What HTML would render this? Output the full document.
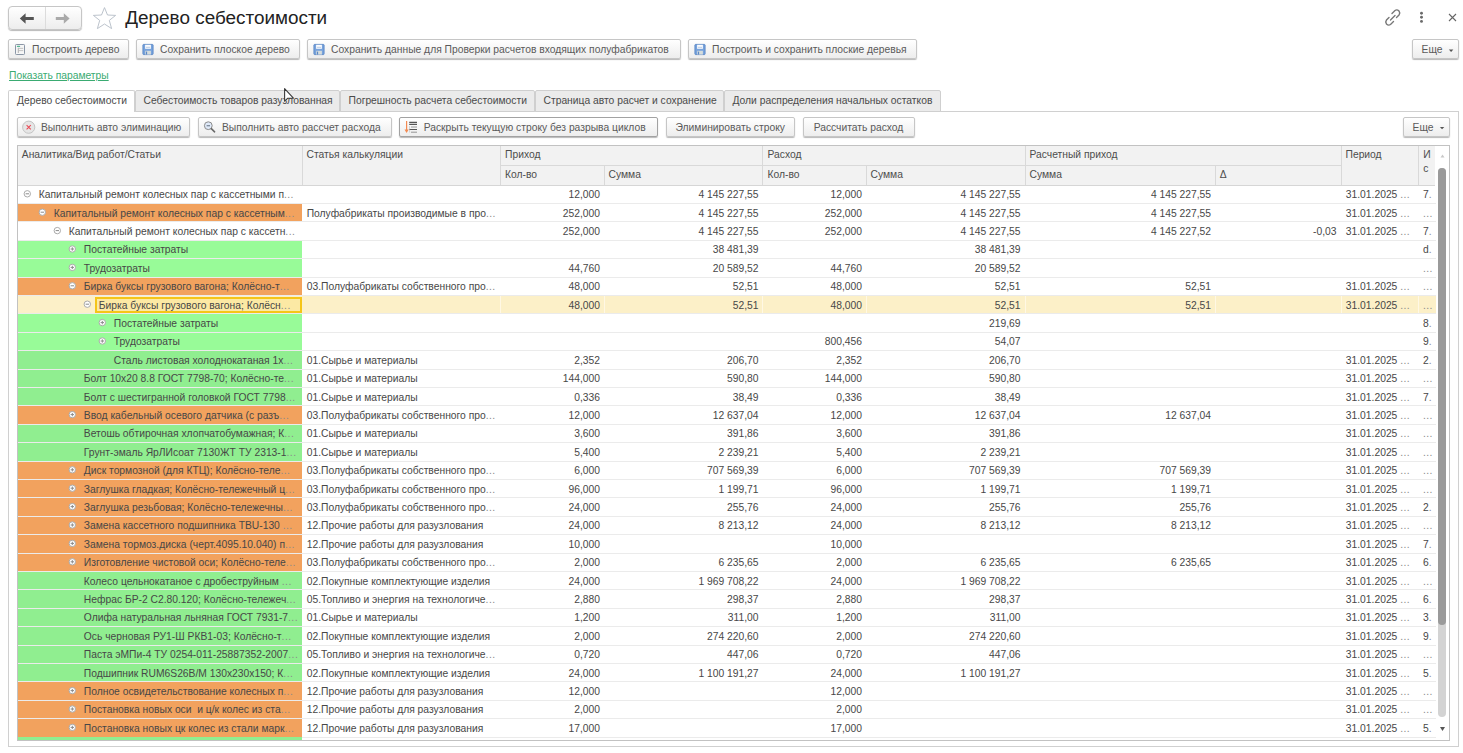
<!DOCTYPE html>
<html><head><meta charset="utf-8"><style>
html,body{margin:0;padding:0;background:#fff;width:1463px;height:753px;overflow:hidden;position:relative}
body{font-family:"Liberation Sans",sans-serif}
.t{position:absolute;line-height:1;white-space:pre}
.b{position:absolute}
.el{color:#8a8a8a;letter-spacing:0.45px}
.btn{position:absolute;box-sizing:border-box;border:1px solid #c6c6c6;border-radius:2px;background:linear-gradient(#ffffff,#ededed);box-shadow:0 1px 1px rgba(0,0,0,0.28)}
</style></head><body>
<div class="btn" style="left:8px;top:6px;width:74px;height:24px;border-radius:4px;"></div><div class="b" style="left:45px;top:7px;width:1px;height:22px;background:#dcdcdc"></div><div class="t" style="left:125.30px;top:9.20px;font-size:18.9px;color:#222;">Дерево себестоимости</div><div class="btn" style="left:8px;top:39px;width:120.5px;height:20px;"></div><div class="t" style="left:32.00px;top:45.28px;font-size:10.3px;color:#5a5a5a;">Построить дерево</div><div class="btn" style="left:136px;top:39px;width:164px;height:20px;"></div><div class="t" style="left:160.00px;top:45.28px;font-size:10.3px;color:#5a5a5a;">Сохранить плоское дерево</div><div class="btn" style="left:307px;top:39px;width:373.5px;height:20px;"></div><div class="t" style="left:331.00px;top:45.28px;font-size:10.3px;color:#5a5a5a;">Сохранить данные для Проверки расчетов входящих полуфабрикатов</div><div class="btn" style="left:688px;top:39px;width:228.5px;height:20px;"></div><div class="t" style="left:712.00px;top:45.28px;font-size:10.3px;color:#5a5a5a;">Построить и сохранить плоские деревья</div><div class="btn" style="left:1411.5px;top:39px;width:47.0px;height:20px;"></div><div class="t" style="left:1421.60px;top:45.28px;font-size:10.3px;color:#5a5a5a;">Еще</div><div class="t" style="left:9.00px;top:71.28px;font-size:10.3px;color:#3aab72;text-decoration:underline;">Показать параметры</div><div class="b" style="left:8px;top:111px;width:1451px;height:636px;border:1px solid #d0d0d0;box-sizing:border-box;background:#fff"></div><div class="b" style="left:134.5px;top:90px;width:205.0px;height:22px;background:#ebebeb;border:1px solid #cfcfcf;box-sizing:border-box;border-radius:2px 2px 0 0"></div><div class="t" style="left:143.50px;top:95.98px;font-size:10.3px;color:#4a4a4a;">Себестоимость товаров разузлованная</div><div class="b" style="left:339.5px;top:90px;width:195.0px;height:22px;background:#ebebeb;border:1px solid #cfcfcf;box-sizing:border-box;border-radius:2px 2px 0 0"></div><div class="t" style="left:348.50px;top:95.98px;font-size:10.3px;color:#4a4a4a;">Погрешность расчета себестоимости</div><div class="b" style="left:534.5px;top:90px;width:189.0px;height:22px;background:#ebebeb;border:1px solid #cfcfcf;box-sizing:border-box;border-radius:2px 2px 0 0"></div><div class="t" style="left:543.50px;top:95.98px;font-size:10.3px;color:#4a4a4a;">Страница авто расчет и сохранение</div><div class="b" style="left:723.5px;top:90px;width:217.0px;height:22px;background:#ebebeb;border:1px solid #cfcfcf;box-sizing:border-box;border-radius:2px 2px 0 0"></div><div class="t" style="left:732.50px;top:95.98px;font-size:10.3px;color:#4a4a4a;">Доли распределения начальных остатков</div><div class="b" style="left:8px;top:90px;width:127px;height:22px;background:#fff;border:1px solid #d0d0d0;border-bottom:none;box-sizing:border-box;border-radius:2px 2px 0 0"></div><div class="t" style="left:17.00px;top:95.98px;font-size:10.3px;color:#4a4a4a;">Дерево себестоимости</div><div class="btn" style="left:17px;top:117px;width:173px;height:19.599999999999994px;"></div><div class="t" style="left:41.00px;top:122.68px;font-size:10.3px;color:#5a5a5a;">Выполнить авто элиминацию</div><div class="btn" style="left:198px;top:117px;width:193.5px;height:19.599999999999994px;"></div><div class="t" style="left:222.00px;top:122.68px;font-size:10.3px;color:#5a5a5a;">Выполнить авто рассчет расхода</div><div class="btn" style="left:399px;top:117px;width:258.5px;height:19.599999999999994px;border-color:#a2a2a2;"></div><div class="t" style="left:423.70px;top:122.68px;font-size:10.3px;color:#5a5a5a;">Раскрыть текущую строку без разрыва циклов</div><div class="btn" style="left:666px;top:117px;width:128.5px;height:19.599999999999994px;"></div><div class="t" style="left:666px;width:128.5px;top:122.68px;font-size:10.3px;color:#5a5a5a;text-align:center">Элиминировать строку</div><div class="btn" style="left:802.5px;top:117px;width:112.0px;height:19.599999999999994px;"></div><div class="t" style="left:802.5px;width:112.0px;top:122.68px;font-size:10.3px;color:#5a5a5a;text-align:center">Рассчитать расход</div><div class="btn" style="left:1403px;top:117px;width:46.5px;height:19.599999999999994px;"></div><div class="t" style="left:1412.60px;top:122.68px;font-size:10.3px;color:#5a5a5a;">Еще</div><div class="b" style="left:17px;top:145px;width:1433px;height:596px;border:1px solid #c2c2c2;box-sizing:border-box;background:#fff"></div><div class="b" style="left:18px;top:146px;width:1417px;height:39px;background:#f2f2f2"></div><div class="b" style="left:302px;top:146px;width:1px;height:39px;background:#d9d9d9"></div><div class="b" style="left:500px;top:146px;width:1px;height:39px;background:#d9d9d9"></div><div class="b" style="left:1341px;top:146px;width:1px;height:39px;background:#d9d9d9"></div><div class="b" style="left:1418px;top:146px;width:1px;height:39px;background:#d9d9d9"></div><div class="b" style="left:500px;top:165px;width:262px;height:1px;background:#d9d9d9"></div><div class="b" style="left:762px;top:165px;width:263px;height:1px;background:#d9d9d9"></div><div class="b" style="left:1025px;top:165px;width:316px;height:1px;background:#d9d9d9"></div><div class="b" style="left:762px;top:146px;width:1px;height:39px;background:#d9d9d9"></div><div class="b" style="left:1025px;top:146px;width:1px;height:39px;background:#d9d9d9"></div><div class="b" style="left:604px;top:165px;width:1px;height:20px;background:#d9d9d9"></div><div class="b" style="left:866px;top:165px;width:1px;height:20px;background:#d9d9d9"></div><div class="b" style="left:1215px;top:165px;width:1px;height:20px;background:#d9d9d9"></div><div class="b" style="left:18px;top:185px;width:1417px;height:1px;background:#d6d6d6"></div><div class="t" style="left:21.80px;top:149.68px;font-size:10.3px;color:#4d4d4d;">Аналитика/Вид работ/Статьи</div><div class="t" style="left:306.50px;top:149.68px;font-size:10.3px;color:#4d4d4d;">Статья калькуляции</div><div class="t" style="left:505.00px;top:149.68px;font-size:10.3px;color:#4d4d4d;">Приход</div><div class="t" style="left:505.00px;top:169.58px;font-size:10.3px;color:#4d4d4d;">Кол-во</div><div class="t" style="left:608.50px;top:169.58px;font-size:10.3px;color:#4d4d4d;">Сумма</div><div class="t" style="left:767.50px;top:149.68px;font-size:10.3px;color:#4d4d4d;">Расход</div><div class="t" style="left:767.50px;top:169.58px;font-size:10.3px;color:#4d4d4d;">Кол-во</div><div class="t" style="left:870.50px;top:169.58px;font-size:10.3px;color:#4d4d4d;">Сумма</div><div class="t" style="left:1029.50px;top:149.68px;font-size:10.3px;color:#4d4d4d;">Расчетный приход</div><div class="t" style="left:1029.50px;top:169.58px;font-size:10.3px;color:#4d4d4d;">Сумма</div><div class="t" style="left:1219.80px;top:169.58px;font-size:10.3px;color:#4d4d4d;">Δ</div><div class="t" style="left:1345.50px;top:149.68px;font-size:10.3px;color:#4d4d4d;">Период</div><div class="t" style="left:1423.20px;top:149.88px;font-size:10.3px;color:#4d4d4d;">И</div><div class="t" style="left:1423.20px;top:163.78px;font-size:10.3px;color:#4d4d4d;">с</div><div class="b" style="left:18px;top:203px;width:1418px;height:1px;background:#ebebeb"></div><div class="t" style="left:38.80px;top:190.28px;font-size:10.3px;color:#474747;">Капитальный ремонт колесных пар с кассетными п<span class="el">...</span></div><div class="t" style="right:863.00px;top:190.28px;font-size:10.3px;color:#474747;text-align:right;">12,000</div><div class="t" style="right:704.50px;top:190.28px;font-size:10.3px;color:#474747;text-align:right;">4 145 227,55</div><div class="t" style="right:601.00px;top:190.28px;font-size:10.3px;color:#474747;text-align:right;">12,000</div><div class="t" style="right:442.50px;top:190.28px;font-size:10.3px;color:#474747;text-align:right;">4 145 227,55</div><div class="t" style="right:252.00px;top:190.28px;font-size:10.3px;color:#474747;text-align:right;">4 145 227,55</div><div class="t" style="left:1345.80px;top:190.28px;font-size:10.3px;color:#474747;">31.01.2025 <span class="el">...</span></div><div class="t" style="left:1423.00px;top:190.28px;font-size:10.3px;color:#474747;">7<span class="el">.</span></div><div class="b" style="left:18px;top:204px;width:284px;height:17px;background:#f2a25e"></div><div class="b" style="left:18px;top:221px;width:1418px;height:1px;background:#ebebeb"></div><div class="t" style="left:53.80px;top:208.68px;font-size:10.3px;color:#474747;">Капитальный ремонт колесных пар с кассетным<span class="el">...</span></div><div class="t" style="left:306.70px;top:208.68px;font-size:10.3px;color:#474747;">Полуфабрикаты производимые в про<span class="el">...</span></div><div class="t" style="right:863.00px;top:208.68px;font-size:10.3px;color:#474747;text-align:right;">252,000</div><div class="t" style="right:704.50px;top:208.68px;font-size:10.3px;color:#474747;text-align:right;">4 145 227,55</div><div class="t" style="right:601.00px;top:208.68px;font-size:10.3px;color:#474747;text-align:right;">252,000</div><div class="t" style="right:442.50px;top:208.68px;font-size:10.3px;color:#474747;text-align:right;">4 145 227,55</div><div class="t" style="right:252.00px;top:208.68px;font-size:10.3px;color:#474747;text-align:right;">4 145 227,55</div><div class="t" style="left:1345.80px;top:208.68px;font-size:10.3px;color:#474747;">31.01.2025 <span class="el">...</span></div><div class="t" style="left:1423.00px;top:208.68px;font-size:10.3px;color:#474747;"><span class="el">...</span></div><div class="b" style="left:18px;top:240px;width:1418px;height:1px;background:#ebebeb"></div><div class="t" style="left:68.80px;top:227.08px;font-size:10.3px;color:#474747;">Капитальный ремонт колесных пар с кассетн<span class="el">...</span></div><div class="t" style="right:863.00px;top:227.08px;font-size:10.3px;color:#474747;text-align:right;">252,000</div><div class="t" style="right:704.50px;top:227.08px;font-size:10.3px;color:#474747;text-align:right;">4 145 227,55</div><div class="t" style="right:601.00px;top:227.08px;font-size:10.3px;color:#474747;text-align:right;">252,000</div><div class="t" style="right:442.50px;top:227.08px;font-size:10.3px;color:#474747;text-align:right;">4 145 227,55</div><div class="t" style="right:252.00px;top:227.08px;font-size:10.3px;color:#474747;text-align:right;">4 145 227,52</div><div class="t" style="right:126.50px;top:227.08px;font-size:10.3px;color:#474747;text-align:right;">-0,03</div><div class="t" style="left:1345.80px;top:227.08px;font-size:10.3px;color:#474747;">31.01.2025 <span class="el">...</span></div><div class="t" style="left:1423.00px;top:227.08px;font-size:10.3px;color:#474747;">7<span class="el">.</span></div><div class="b" style="left:18px;top:241px;width:284px;height:17px;background:#98fb98"></div><div class="b" style="left:18px;top:258px;width:1418px;height:1px;background:#ebebeb"></div><div class="t" style="left:83.80px;top:245.48px;font-size:10.3px;color:#474747;">Постатейные затраты</div><div class="t" style="right:704.50px;top:245.48px;font-size:10.3px;color:#474747;text-align:right;">38 481,39</div><div class="t" style="right:442.50px;top:245.48px;font-size:10.3px;color:#474747;text-align:right;">38 481,39</div><div class="t" style="left:1423.00px;top:245.48px;font-size:10.3px;color:#474747;">d<span class="el">.</span></div><div class="b" style="left:18px;top:259px;width:284px;height:18px;background:#98fb98"></div><div class="b" style="left:18px;top:277px;width:1418px;height:1px;background:#ebebeb"></div><div class="t" style="left:83.80px;top:263.88px;font-size:10.3px;color:#474747;">Трудозатраты</div><div class="t" style="right:863.00px;top:263.88px;font-size:10.3px;color:#474747;text-align:right;">44,760</div><div class="t" style="right:704.50px;top:263.88px;font-size:10.3px;color:#474747;text-align:right;">20 589,52</div><div class="t" style="right:601.00px;top:263.88px;font-size:10.3px;color:#474747;text-align:right;">44,760</div><div class="t" style="right:442.50px;top:263.88px;font-size:10.3px;color:#474747;text-align:right;">20 589,52</div><div class="t" style="left:1423.00px;top:263.88px;font-size:10.3px;color:#474747;"><span class="el">...</span></div><div class="b" style="left:18px;top:278px;width:284px;height:17px;background:#f2a25e"></div><div class="b" style="left:18px;top:295px;width:1418px;height:1px;background:#ebebeb"></div><div class="t" style="left:83.80px;top:282.28px;font-size:10.3px;color:#474747;">Бирка буксы грузового вагона; Колёсно-т<span class="el">...</span></div><div class="t" style="left:306.70px;top:282.28px;font-size:10.3px;color:#474747;">03.Полуфабрикаты собственного про<span class="el">...</span></div><div class="t" style="right:863.00px;top:282.28px;font-size:10.3px;color:#474747;text-align:right;">48,000</div><div class="t" style="right:704.50px;top:282.28px;font-size:10.3px;color:#474747;text-align:right;">52,51</div><div class="t" style="right:601.00px;top:282.28px;font-size:10.3px;color:#474747;text-align:right;">48,000</div><div class="t" style="right:442.50px;top:282.28px;font-size:10.3px;color:#474747;text-align:right;">52,51</div><div class="t" style="right:252.00px;top:282.28px;font-size:10.3px;color:#474747;text-align:right;">52,51</div><div class="t" style="left:1345.80px;top:282.28px;font-size:10.3px;color:#474747;">31.01.2025 <span class="el">...</span></div><div class="t" style="left:1423.00px;top:282.28px;font-size:10.3px;color:#474747;"><span class="el">...</span></div><div class="b" style="left:18px;top:296px;width:1418px;height:17px;background:#fcf0c8"></div><div class="b" style="left:500px;top:296px;width:1px;height:17px;background:#fff8e4"></div><div class="b" style="left:604px;top:296px;width:1px;height:17px;background:#fff8e4"></div><div class="b" style="left:762px;top:296px;width:1px;height:17px;background:#fff8e4"></div><div class="b" style="left:866px;top:296px;width:1px;height:17px;background:#fff8e4"></div><div class="b" style="left:1025px;top:296px;width:1px;height:17px;background:#fff8e4"></div><div class="b" style="left:1215px;top:296px;width:1px;height:17px;background:#fff8e4"></div><div class="b" style="left:1341px;top:296px;width:1px;height:17px;background:#fff8e4"></div><div class="b" style="left:1418px;top:296px;width:1px;height:17px;background:#fff8e4"></div><div class="b" style="left:18px;top:296px;width:284px;height:17px;background:#fcf0c8"></div><div class="b" style="left:18px;top:313px;width:1418px;height:1px;background:#ebebeb"></div><div class="b" style="left:95px;top:297px;width:207px;height:16px;border:2px solid #f5c518;box-sizing:border-box;background:#fce9a4"></div><div class="t" style="left:98.80px;top:300.68px;font-size:10.3px;color:#474747;">Бирка буксы грузового вагона; Колёсн<span class="el">...</span></div><div class="t" style="right:863.00px;top:300.68px;font-size:10.3px;color:#474747;text-align:right;">48,000</div><div class="t" style="right:704.50px;top:300.68px;font-size:10.3px;color:#474747;text-align:right;">52,51</div><div class="t" style="right:601.00px;top:300.68px;font-size:10.3px;color:#474747;text-align:right;">48,000</div><div class="t" style="right:442.50px;top:300.68px;font-size:10.3px;color:#474747;text-align:right;">52,51</div><div class="t" style="right:252.00px;top:300.68px;font-size:10.3px;color:#474747;text-align:right;">52,51</div><div class="t" style="left:1345.80px;top:300.68px;font-size:10.3px;color:#474747;">31.01.2025 <span class="el">...</span></div><div class="t" style="left:1423.00px;top:300.68px;font-size:10.3px;color:#474747;"><span class="el">...</span></div><div class="b" style="left:18px;top:314px;width:284px;height:18px;background:#98fb98"></div><div class="b" style="left:18px;top:332px;width:1418px;height:1px;background:#ebebeb"></div><div class="t" style="left:113.80px;top:319.08px;font-size:10.3px;color:#474747;">Постатейные затраты</div><div class="t" style="right:442.50px;top:319.08px;font-size:10.3px;color:#474747;text-align:right;">219,69</div><div class="t" style="left:1423.00px;top:319.08px;font-size:10.3px;color:#474747;">8<span class="el">.</span></div><div class="b" style="left:18px;top:333px;width:284px;height:17px;background:#98fb98"></div><div class="b" style="left:18px;top:350px;width:1418px;height:1px;background:#ebebeb"></div><div class="t" style="left:113.80px;top:337.48px;font-size:10.3px;color:#474747;">Трудозатраты</div><div class="t" style="right:601.00px;top:337.48px;font-size:10.3px;color:#474747;text-align:right;">800,456</div><div class="t" style="right:442.50px;top:337.48px;font-size:10.3px;color:#474747;text-align:right;">54,07</div><div class="t" style="left:1423.00px;top:337.48px;font-size:10.3px;color:#474747;">9<span class="el">.</span></div><div class="b" style="left:18px;top:351px;width:284px;height:18px;background:#90ee90"></div><div class="b" style="left:18px;top:369px;width:1418px;height:1px;background:#ebebeb"></div><div class="t" style="left:113.80px;top:355.88px;font-size:10.3px;color:#474747;">Сталь листовая холоднокатаная 1х<span class="el">...</span></div><div class="t" style="left:306.70px;top:355.88px;font-size:10.3px;color:#474747;">01.Сырье и материалы</div><div class="t" style="right:863.00px;top:355.88px;font-size:10.3px;color:#474747;text-align:right;">2,352</div><div class="t" style="right:704.50px;top:355.88px;font-size:10.3px;color:#474747;text-align:right;">206,70</div><div class="t" style="right:601.00px;top:355.88px;font-size:10.3px;color:#474747;text-align:right;">2,352</div><div class="t" style="right:442.50px;top:355.88px;font-size:10.3px;color:#474747;text-align:right;">206,70</div><div class="t" style="left:1345.80px;top:355.88px;font-size:10.3px;color:#474747;">31.01.2025 <span class="el">...</span></div><div class="t" style="left:1423.00px;top:355.88px;font-size:10.3px;color:#474747;">2<span class="el">.</span></div><div class="b" style="left:18px;top:370px;width:284px;height:17px;background:#90ee90"></div><div class="b" style="left:18px;top:387px;width:1418px;height:1px;background:#ebebeb"></div><div class="t" style="left:83.80px;top:374.28px;font-size:10.3px;color:#474747;">Болт 10х20 8.8 ГОСТ 7798-70; Колёсно-те<span class="el">...</span></div><div class="t" style="left:306.70px;top:374.28px;font-size:10.3px;color:#474747;">01.Сырье и материалы</div><div class="t" style="right:863.00px;top:374.28px;font-size:10.3px;color:#474747;text-align:right;">144,000</div><div class="t" style="right:704.50px;top:374.28px;font-size:10.3px;color:#474747;text-align:right;">590,80</div><div class="t" style="right:601.00px;top:374.28px;font-size:10.3px;color:#474747;text-align:right;">144,000</div><div class="t" style="right:442.50px;top:374.28px;font-size:10.3px;color:#474747;text-align:right;">590,80</div><div class="t" style="left:1345.80px;top:374.28px;font-size:10.3px;color:#474747;">31.01.2025 <span class="el">...</span></div><div class="t" style="left:1423.00px;top:374.28px;font-size:10.3px;color:#474747;"><span class="el">...</span></div><div class="b" style="left:18px;top:388px;width:284px;height:17px;background:#90ee90"></div><div class="b" style="left:18px;top:405px;width:1418px;height:1px;background:#ebebeb"></div><div class="t" style="left:83.80px;top:392.68px;font-size:10.3px;color:#474747;">Болт с шестигранной головкой ГОСТ 7798<span class="el">...</span></div><div class="t" style="left:306.70px;top:392.68px;font-size:10.3px;color:#474747;">01.Сырье и материалы</div><div class="t" style="right:863.00px;top:392.68px;font-size:10.3px;color:#474747;text-align:right;">0,336</div><div class="t" style="right:704.50px;top:392.68px;font-size:10.3px;color:#474747;text-align:right;">38,49</div><div class="t" style="right:601.00px;top:392.68px;font-size:10.3px;color:#474747;text-align:right;">0,336</div><div class="t" style="right:442.50px;top:392.68px;font-size:10.3px;color:#474747;text-align:right;">38,49</div><div class="t" style="left:1345.80px;top:392.68px;font-size:10.3px;color:#474747;">31.01.2025 <span class="el">...</span></div><div class="t" style="left:1423.00px;top:392.68px;font-size:10.3px;color:#474747;">7<span class="el">.</span></div><div class="b" style="left:18px;top:406px;width:284px;height:18px;background:#f2a25e"></div><div class="b" style="left:18px;top:424px;width:1418px;height:1px;background:#ebebeb"></div><div class="t" style="left:83.80px;top:411.08px;font-size:10.3px;color:#474747;">Ввод кабельный осевого датчика (с разъ<span class="el">...</span></div><div class="t" style="left:306.70px;top:411.08px;font-size:10.3px;color:#474747;">03.Полуфабрикаты собственного про<span class="el">...</span></div><div class="t" style="right:863.00px;top:411.08px;font-size:10.3px;color:#474747;text-align:right;">12,000</div><div class="t" style="right:704.50px;top:411.08px;font-size:10.3px;color:#474747;text-align:right;">12 637,04</div><div class="t" style="right:601.00px;top:411.08px;font-size:10.3px;color:#474747;text-align:right;">12,000</div><div class="t" style="right:442.50px;top:411.08px;font-size:10.3px;color:#474747;text-align:right;">12 637,04</div><div class="t" style="right:252.00px;top:411.08px;font-size:10.3px;color:#474747;text-align:right;">12 637,04</div><div class="t" style="left:1345.80px;top:411.08px;font-size:10.3px;color:#474747;">31.01.2025 <span class="el">...</span></div><div class="t" style="left:1423.00px;top:411.08px;font-size:10.3px;color:#474747;"><span class="el">...</span></div><div class="b" style="left:18px;top:425px;width:284px;height:17px;background:#90ee90"></div><div class="b" style="left:18px;top:442px;width:1418px;height:1px;background:#ebebeb"></div><div class="t" style="left:83.80px;top:429.48px;font-size:10.3px;color:#474747;">Ветошь обтирочная хлопчатобумажная; К<span class="el">...</span></div><div class="t" style="left:306.70px;top:429.48px;font-size:10.3px;color:#474747;">01.Сырье и материалы</div><div class="t" style="right:863.00px;top:429.48px;font-size:10.3px;color:#474747;text-align:right;">3,600</div><div class="t" style="right:704.50px;top:429.48px;font-size:10.3px;color:#474747;text-align:right;">391,86</div><div class="t" style="right:601.00px;top:429.48px;font-size:10.3px;color:#474747;text-align:right;">3,600</div><div class="t" style="right:442.50px;top:429.48px;font-size:10.3px;color:#474747;text-align:right;">391,86</div><div class="t" style="left:1345.80px;top:429.48px;font-size:10.3px;color:#474747;">31.01.2025 <span class="el">...</span></div><div class="t" style="left:1423.00px;top:429.48px;font-size:10.3px;color:#474747;"><span class="el">...</span></div><div class="b" style="left:18px;top:443px;width:284px;height:18px;background:#90ee90"></div><div class="b" style="left:18px;top:461px;width:1418px;height:1px;background:#ebebeb"></div><div class="t" style="left:83.80px;top:447.88px;font-size:10.3px;color:#474747;">Грунт-эмаль ЯрЛИсоат 7130ЖТ ТУ 2313-1<span class="el">...</span></div><div class="t" style="left:306.70px;top:447.88px;font-size:10.3px;color:#474747;">01.Сырье и материалы</div><div class="t" style="right:863.00px;top:447.88px;font-size:10.3px;color:#474747;text-align:right;">5,400</div><div class="t" style="right:704.50px;top:447.88px;font-size:10.3px;color:#474747;text-align:right;">2 239,21</div><div class="t" style="right:601.00px;top:447.88px;font-size:10.3px;color:#474747;text-align:right;">5,400</div><div class="t" style="right:442.50px;top:447.88px;font-size:10.3px;color:#474747;text-align:right;">2 239,21</div><div class="t" style="left:1345.80px;top:447.88px;font-size:10.3px;color:#474747;">31.01.2025 <span class="el">...</span></div><div class="t" style="left:1423.00px;top:447.88px;font-size:10.3px;color:#474747;"><span class="el">...</span></div><div class="b" style="left:18px;top:462px;width:284px;height:17px;background:#f2a25e"></div><div class="b" style="left:18px;top:479px;width:1418px;height:1px;background:#ebebeb"></div><div class="t" style="left:83.80px;top:466.28px;font-size:10.3px;color:#474747;">Диск тормозной (для КТЦ); Колёсно-теле<span class="el">...</span></div><div class="t" style="left:306.70px;top:466.28px;font-size:10.3px;color:#474747;">03.Полуфабрикаты собственного про<span class="el">...</span></div><div class="t" style="right:863.00px;top:466.28px;font-size:10.3px;color:#474747;text-align:right;">6,000</div><div class="t" style="right:704.50px;top:466.28px;font-size:10.3px;color:#474747;text-align:right;">707 569,39</div><div class="t" style="right:601.00px;top:466.28px;font-size:10.3px;color:#474747;text-align:right;">6,000</div><div class="t" style="right:442.50px;top:466.28px;font-size:10.3px;color:#474747;text-align:right;">707 569,39</div><div class="t" style="right:252.00px;top:466.28px;font-size:10.3px;color:#474747;text-align:right;">707 569,39</div><div class="t" style="left:1345.80px;top:466.28px;font-size:10.3px;color:#474747;">31.01.2025 <span class="el">...</span></div><div class="t" style="left:1423.00px;top:466.28px;font-size:10.3px;color:#474747;"><span class="el">...</span></div><div class="b" style="left:18px;top:480px;width:284px;height:17px;background:#f2a25e"></div><div class="b" style="left:18px;top:497px;width:1418px;height:1px;background:#ebebeb"></div><div class="t" style="left:83.80px;top:484.68px;font-size:10.3px;color:#474747;">Заглушка гладкая; Колёсно-тележечный ц<span class="el">...</span></div><div class="t" style="left:306.70px;top:484.68px;font-size:10.3px;color:#474747;">03.Полуфабрикаты собственного про<span class="el">...</span></div><div class="t" style="right:863.00px;top:484.68px;font-size:10.3px;color:#474747;text-align:right;">96,000</div><div class="t" style="right:704.50px;top:484.68px;font-size:10.3px;color:#474747;text-align:right;">1 199,71</div><div class="t" style="right:601.00px;top:484.68px;font-size:10.3px;color:#474747;text-align:right;">96,000</div><div class="t" style="right:442.50px;top:484.68px;font-size:10.3px;color:#474747;text-align:right;">1 199,71</div><div class="t" style="right:252.00px;top:484.68px;font-size:10.3px;color:#474747;text-align:right;">1 199,71</div><div class="t" style="left:1345.80px;top:484.68px;font-size:10.3px;color:#474747;">31.01.2025 <span class="el">...</span></div><div class="t" style="left:1423.00px;top:484.68px;font-size:10.3px;color:#474747;"><span class="el">...</span></div><div class="b" style="left:18px;top:498px;width:284px;height:18px;background:#f2a25e"></div><div class="b" style="left:18px;top:516px;width:1418px;height:1px;background:#ebebeb"></div><div class="t" style="left:83.80px;top:503.08px;font-size:10.3px;color:#474747;">Заглушка резьбовая; Колёсно-тележечны<span class="el">...</span></div><div class="t" style="left:306.70px;top:503.08px;font-size:10.3px;color:#474747;">03.Полуфабрикаты собственного про<span class="el">...</span></div><div class="t" style="right:863.00px;top:503.08px;font-size:10.3px;color:#474747;text-align:right;">24,000</div><div class="t" style="right:704.50px;top:503.08px;font-size:10.3px;color:#474747;text-align:right;">255,76</div><div class="t" style="right:601.00px;top:503.08px;font-size:10.3px;color:#474747;text-align:right;">24,000</div><div class="t" style="right:442.50px;top:503.08px;font-size:10.3px;color:#474747;text-align:right;">255,76</div><div class="t" style="right:252.00px;top:503.08px;font-size:10.3px;color:#474747;text-align:right;">255,76</div><div class="t" style="left:1345.80px;top:503.08px;font-size:10.3px;color:#474747;">31.01.2025 <span class="el">...</span></div><div class="t" style="left:1423.00px;top:503.08px;font-size:10.3px;color:#474747;">2<span class="el">.</span></div><div class="b" style="left:18px;top:517px;width:284px;height:17px;background:#f2a25e"></div><div class="b" style="left:18px;top:534px;width:1418px;height:1px;background:#ebebeb"></div><div class="t" style="left:83.80px;top:521.48px;font-size:10.3px;color:#474747;">Замена кассетного подшипника TBU-130 <span class="el">...</span></div><div class="t" style="left:306.70px;top:521.48px;font-size:10.3px;color:#474747;">12.Прочие работы для разузлования</div><div class="t" style="right:863.00px;top:521.48px;font-size:10.3px;color:#474747;text-align:right;">24,000</div><div class="t" style="right:704.50px;top:521.48px;font-size:10.3px;color:#474747;text-align:right;">8 213,12</div><div class="t" style="right:601.00px;top:521.48px;font-size:10.3px;color:#474747;text-align:right;">24,000</div><div class="t" style="right:442.50px;top:521.48px;font-size:10.3px;color:#474747;text-align:right;">8 213,12</div><div class="t" style="right:252.00px;top:521.48px;font-size:10.3px;color:#474747;text-align:right;">8 213,12</div><div class="t" style="left:1345.80px;top:521.48px;font-size:10.3px;color:#474747;">31.01.2025 <span class="el">...</span></div><div class="t" style="left:1423.00px;top:521.48px;font-size:10.3px;color:#474747;"><span class="el">...</span></div><div class="b" style="left:18px;top:535px;width:284px;height:18px;background:#f2a25e"></div><div class="b" style="left:18px;top:553px;width:1418px;height:1px;background:#ebebeb"></div><div class="t" style="left:83.80px;top:539.88px;font-size:10.3px;color:#474747;">Замена тормоз.диска (черт.4095.10.040) п<span class="el">...</span></div><div class="t" style="left:306.70px;top:539.88px;font-size:10.3px;color:#474747;">12.Прочие работы для разузлования</div><div class="t" style="right:863.00px;top:539.88px;font-size:10.3px;color:#474747;text-align:right;">10,000</div><div class="t" style="right:601.00px;top:539.88px;font-size:10.3px;color:#474747;text-align:right;">10,000</div><div class="t" style="left:1345.80px;top:539.88px;font-size:10.3px;color:#474747;">31.01.2025 <span class="el">...</span></div><div class="t" style="left:1423.00px;top:539.88px;font-size:10.3px;color:#474747;">7<span class="el">.</span></div><div class="b" style="left:18px;top:554px;width:284px;height:17px;background:#f2a25e"></div><div class="b" style="left:18px;top:571px;width:1418px;height:1px;background:#ebebeb"></div><div class="t" style="left:83.80px;top:558.28px;font-size:10.3px;color:#474747;">Изготовление чистовой оси; Колёсно-теле<span class="el">...</span></div><div class="t" style="left:306.70px;top:558.28px;font-size:10.3px;color:#474747;">03.Полуфабрикаты собственного про<span class="el">...</span></div><div class="t" style="right:863.00px;top:558.28px;font-size:10.3px;color:#474747;text-align:right;">2,000</div><div class="t" style="right:704.50px;top:558.28px;font-size:10.3px;color:#474747;text-align:right;">6 235,65</div><div class="t" style="right:601.00px;top:558.28px;font-size:10.3px;color:#474747;text-align:right;">2,000</div><div class="t" style="right:442.50px;top:558.28px;font-size:10.3px;color:#474747;text-align:right;">6 235,65</div><div class="t" style="right:252.00px;top:558.28px;font-size:10.3px;color:#474747;text-align:right;">6 235,65</div><div class="t" style="left:1345.80px;top:558.28px;font-size:10.3px;color:#474747;">31.01.2025 <span class="el">...</span></div><div class="t" style="left:1423.00px;top:558.28px;font-size:10.3px;color:#474747;">6<span class="el">.</span></div><div class="b" style="left:18px;top:572px;width:284px;height:17px;background:#90ee90"></div><div class="b" style="left:18px;top:589px;width:1418px;height:1px;background:#ebebeb"></div><div class="t" style="left:83.80px;top:576.68px;font-size:10.3px;color:#474747;">Колесо цельнокатаное с дробеструйным <span class="el">...</span></div><div class="t" style="left:306.70px;top:576.68px;font-size:10.3px;color:#474747;">02.Покупные комплектующие изделия</div><div class="t" style="right:863.00px;top:576.68px;font-size:10.3px;color:#474747;text-align:right;">24,000</div><div class="t" style="right:704.50px;top:576.68px;font-size:10.3px;color:#474747;text-align:right;">1 969 708,22</div><div class="t" style="right:601.00px;top:576.68px;font-size:10.3px;color:#474747;text-align:right;">24,000</div><div class="t" style="right:442.50px;top:576.68px;font-size:10.3px;color:#474747;text-align:right;">1 969 708,22</div><div class="t" style="left:1345.80px;top:576.68px;font-size:10.3px;color:#474747;">31.01.2025 <span class="el">...</span></div><div class="t" style="left:1423.00px;top:576.68px;font-size:10.3px;color:#474747;"><span class="el">...</span></div><div class="b" style="left:18px;top:590px;width:284px;height:18px;background:#90ee90"></div><div class="b" style="left:18px;top:608px;width:1418px;height:1px;background:#ebebeb"></div><div class="t" style="left:83.80px;top:595.08px;font-size:10.3px;color:#474747;">Нефрас БР-2 С2.80.120; Колёсно-тележеч<span class="el">...</span></div><div class="t" style="left:306.70px;top:595.08px;font-size:10.3px;color:#474747;">05.Топливо и энергия на технологиче<span class="el">...</span></div><div class="t" style="right:863.00px;top:595.08px;font-size:10.3px;color:#474747;text-align:right;">2,880</div><div class="t" style="right:704.50px;top:595.08px;font-size:10.3px;color:#474747;text-align:right;">298,37</div><div class="t" style="right:601.00px;top:595.08px;font-size:10.3px;color:#474747;text-align:right;">2,880</div><div class="t" style="right:442.50px;top:595.08px;font-size:10.3px;color:#474747;text-align:right;">298,37</div><div class="t" style="left:1345.80px;top:595.08px;font-size:10.3px;color:#474747;">31.01.2025 <span class="el">...</span></div><div class="t" style="left:1423.00px;top:595.08px;font-size:10.3px;color:#474747;">6<span class="el">.</span></div><div class="b" style="left:18px;top:609px;width:284px;height:17px;background:#90ee90"></div><div class="b" style="left:18px;top:626px;width:1418px;height:1px;background:#ebebeb"></div><div class="t" style="left:83.80px;top:613.48px;font-size:10.3px;color:#474747;">Олифа натуральная льняная ГОСТ 7931-7<span class="el">...</span></div><div class="t" style="left:306.70px;top:613.48px;font-size:10.3px;color:#474747;">01.Сырье и материалы</div><div class="t" style="right:863.00px;top:613.48px;font-size:10.3px;color:#474747;text-align:right;">1,200</div><div class="t" style="right:704.50px;top:613.48px;font-size:10.3px;color:#474747;text-align:right;">311,00</div><div class="t" style="right:601.00px;top:613.48px;font-size:10.3px;color:#474747;text-align:right;">1,200</div><div class="t" style="right:442.50px;top:613.48px;font-size:10.3px;color:#474747;text-align:right;">311,00</div><div class="t" style="left:1345.80px;top:613.48px;font-size:10.3px;color:#474747;">31.01.2025 <span class="el">...</span></div><div class="t" style="left:1423.00px;top:613.48px;font-size:10.3px;color:#474747;">3<span class="el">.</span></div><div class="b" style="left:18px;top:627px;width:284px;height:18px;background:#90ee90"></div><div class="b" style="left:18px;top:645px;width:1418px;height:1px;background:#ebebeb"></div><div class="t" style="left:83.80px;top:631.88px;font-size:10.3px;color:#474747;">Ось черновая РУ1-Ш РКВ1-03; Колёсно-т<span class="el">...</span></div><div class="t" style="left:306.70px;top:631.88px;font-size:10.3px;color:#474747;">02.Покупные комплектующие изделия</div><div class="t" style="right:863.00px;top:631.88px;font-size:10.3px;color:#474747;text-align:right;">2,000</div><div class="t" style="right:704.50px;top:631.88px;font-size:10.3px;color:#474747;text-align:right;">274 220,60</div><div class="t" style="right:601.00px;top:631.88px;font-size:10.3px;color:#474747;text-align:right;">2,000</div><div class="t" style="right:442.50px;top:631.88px;font-size:10.3px;color:#474747;text-align:right;">274 220,60</div><div class="t" style="left:1345.80px;top:631.88px;font-size:10.3px;color:#474747;">31.01.2025 <span class="el">...</span></div><div class="t" style="left:1423.00px;top:631.88px;font-size:10.3px;color:#474747;">9<span class="el">.</span></div><div class="b" style="left:18px;top:646px;width:284px;height:17px;background:#90ee90"></div><div class="b" style="left:18px;top:663px;width:1418px;height:1px;background:#ebebeb"></div><div class="t" style="left:83.80px;top:650.28px;font-size:10.3px;color:#474747;">Паста эМПи-4 ТУ 0254-011-25887352-2007<span class="el">...</span></div><div class="t" style="left:306.70px;top:650.28px;font-size:10.3px;color:#474747;">05.Топливо и энергия на технологиче<span class="el">...</span></div><div class="t" style="right:863.00px;top:650.28px;font-size:10.3px;color:#474747;text-align:right;">0,720</div><div class="t" style="right:704.50px;top:650.28px;font-size:10.3px;color:#474747;text-align:right;">447,06</div><div class="t" style="right:601.00px;top:650.28px;font-size:10.3px;color:#474747;text-align:right;">0,720</div><div class="t" style="right:442.50px;top:650.28px;font-size:10.3px;color:#474747;text-align:right;">447,06</div><div class="t" style="left:1345.80px;top:650.28px;font-size:10.3px;color:#474747;">31.01.2025 <span class="el">...</span></div><div class="t" style="left:1423.00px;top:650.28px;font-size:10.3px;color:#474747;"><span class="el">...</span></div><div class="b" style="left:18px;top:664px;width:284px;height:17px;background:#90ee90"></div><div class="b" style="left:18px;top:681px;width:1418px;height:1px;background:#ebebeb"></div><div class="t" style="left:83.80px;top:668.68px;font-size:10.3px;color:#474747;">Подшипник RUM6S26B/M 130x230x150; К<span class="el">...</span></div><div class="t" style="left:306.70px;top:668.68px;font-size:10.3px;color:#474747;">02.Покупные комплектующие изделия</div><div class="t" style="right:863.00px;top:668.68px;font-size:10.3px;color:#474747;text-align:right;">24,000</div><div class="t" style="right:704.50px;top:668.68px;font-size:10.3px;color:#474747;text-align:right;">1 100 191,27</div><div class="t" style="right:601.00px;top:668.68px;font-size:10.3px;color:#474747;text-align:right;">24,000</div><div class="t" style="right:442.50px;top:668.68px;font-size:10.3px;color:#474747;text-align:right;">1 100 191,27</div><div class="t" style="left:1345.80px;top:668.68px;font-size:10.3px;color:#474747;">31.01.2025 <span class="el">...</span></div><div class="t" style="left:1423.00px;top:668.68px;font-size:10.3px;color:#474747;">5<span class="el">.</span></div><div class="b" style="left:18px;top:682px;width:284px;height:18px;background:#f2a25e"></div><div class="b" style="left:18px;top:700px;width:1418px;height:1px;background:#ebebeb"></div><div class="t" style="left:83.80px;top:687.08px;font-size:10.3px;color:#474747;">Полное освидетельствование колесных п<span class="el">...</span></div><div class="t" style="left:306.70px;top:687.08px;font-size:10.3px;color:#474747;">12.Прочие работы для разузлования</div><div class="t" style="right:863.00px;top:687.08px;font-size:10.3px;color:#474747;text-align:right;">12,000</div><div class="t" style="right:601.00px;top:687.08px;font-size:10.3px;color:#474747;text-align:right;">12,000</div><div class="t" style="left:1345.80px;top:687.08px;font-size:10.3px;color:#474747;">31.01.2025 <span class="el">...</span></div><div class="t" style="left:1423.00px;top:687.08px;font-size:10.3px;color:#474747;"><span class="el">...</span></div><div class="b" style="left:18px;top:701px;width:284px;height:17px;background:#f2a25e"></div><div class="b" style="left:18px;top:718px;width:1418px;height:1px;background:#ebebeb"></div><div class="t" style="left:83.80px;top:705.48px;font-size:10.3px;color:#474747;">Постановка новых оси  и ц/к колес из ста<span class="el">...</span></div><div class="t" style="left:306.70px;top:705.48px;font-size:10.3px;color:#474747;">12.Прочие работы для разузлования</div><div class="t" style="right:863.00px;top:705.48px;font-size:10.3px;color:#474747;text-align:right;">2,000</div><div class="t" style="right:601.00px;top:705.48px;font-size:10.3px;color:#474747;text-align:right;">2,000</div><div class="t" style="left:1345.80px;top:705.48px;font-size:10.3px;color:#474747;">31.01.2025 <span class="el">...</span></div><div class="t" style="left:1423.00px;top:705.48px;font-size:10.3px;color:#474747;"><span class="el">...</span></div><div class="b" style="left:18px;top:719px;width:284px;height:18px;background:#f2a25e"></div><div class="b" style="left:302px;top:737px;width:1134px;height:1px;background:#ebebeb"></div><div class="b" style="left:18px;top:737px;width:284px;height:3px;background:#90ee90"></div><div class="t" style="left:83.80px;top:723.88px;font-size:10.3px;color:#474747;">Постановка новых цк колес из стали марк<span class="el">...</span></div><div class="t" style="left:306.70px;top:723.88px;font-size:10.3px;color:#474747;">12.Прочие работы для разузлования</div><div class="t" style="right:863.00px;top:723.88px;font-size:10.3px;color:#474747;text-align:right;">17,000</div><div class="t" style="right:601.00px;top:723.88px;font-size:10.3px;color:#474747;text-align:right;">17,000</div><div class="t" style="left:1345.80px;top:723.88px;font-size:10.3px;color:#474747;">31.01.2025 <span class="el">...</span></div><div class="t" style="left:1423.00px;top:723.88px;font-size:10.3px;color:#474747;">5<span class="el">.</span></div><div class="b" style="left:18px;top:738px;width:284px;height:1px;background:#90ee90"></div><div class="b" style="left:1438px;top:168px;width:8px;height:549px;background:#d3d3d3;border-radius:4px"></div><div class="b" style="left:1438px;top:168px;width:8px;height:457px;background:#9a9a9a;border-radius:4px"></div>
<svg class="b" style="left:0;top:0" width="1463" height="753" viewBox="0 0 1463 753"><path d="M19.8 18.5 L25.6 13.2 L25.6 16.9 L33.8 16.9 L33.8 20.1 L25.6 20.1 L25.6 23.8 Z" fill="#555"/><path d="M69.6 18.5 L63.8 13.2 L63.8 16.9 L55.8 16.9 L55.8 20.1 L63.8 20.1 L63.8 23.8 Z" fill="#aaa"/><path d="M104.5 7.6 L107.5 15 L115.6 15.4 L109.3 20.4 L111.6 28.6 L104.5 24 L97.4 28.6 L99.7 20.4 L93.4 15.4 L101.5 15 Z" fill="none" stroke="#b4bcc6" stroke-width="0.9" stroke-linejoin="miter"/><g fill="none" stroke="#777" stroke-width="1.4" stroke-linecap="round"><path d="M1392 13.5 L1395 10.5 Q1397 9 1399 11 Q1400.5 13 1399 15 L1396.5 17.5"/><path d="M1393.5 21.5 L1390.5 24.5 Q1388.5 26 1386.5 24 Q1385 22 1386.5 20 L1389 17.5"/><path d="M1390.5 20 L1395 15.5"/></g><circle cx="1421.5" cy="13.2" r="1.45" fill="#6a6a6a"/><circle cx="1421.5" cy="17.3" r="1.45" fill="#6a6a6a"/><circle cx="1421.5" cy="21.4" r="1.45" fill="#6a6a6a"/><path d="M1449 14 L1456 21 M1456 14 L1449 21" stroke="#666" stroke-width="1.1"/><rect x="15.5" y="44.5" width="9" height="10" rx="0.8" fill="#f6f6f6" stroke="#8a96a6" stroke-width="1"/><rect x="16.9" y="45.7" width="3.2" height="1.2" rx="0.5" fill="#57b894"/><path d="M18.3 47.8 V53" stroke="#a0a0a0" stroke-width="0.8"/><path d="M18.5 48.4 H23.2 M18.5 50.6 H23.2" stroke="#b5b5b5" stroke-width="0.8"/><rect x="142.9" y="44.4" width="10.2" height="10.2" rx="0.8" fill="#78a3dc" stroke="#4f7fc2" stroke-width="0.8"/><rect x="145.1" y="44.8" width="5.8" height="4" fill="#fbfcfe"/><path d="M145.9 47.3 H150.1" stroke="#9db6d6" stroke-width="0.7"/><rect x="145.3" y="50.8" width="5.6" height="3.8" fill="#d5dcdc"/><rect x="146.1" y="51.6" width="1" height="3" fill="#4f7fc2"/><rect x="313.9" y="44.4" width="10.2" height="10.2" rx="0.8" fill="#78a3dc" stroke="#4f7fc2" stroke-width="0.8"/><rect x="316.1" y="44.8" width="5.8" height="4" fill="#fbfcfe"/><path d="M316.9 47.3 H321.1" stroke="#9db6d6" stroke-width="0.7"/><rect x="316.3" y="50.8" width="5.6" height="3.8" fill="#d5dcdc"/><rect x="317.1" y="51.6" width="1" height="3" fill="#4f7fc2"/><rect x="694.9" y="44.4" width="10.2" height="10.2" rx="0.8" fill="#78a3dc" stroke="#4f7fc2" stroke-width="0.8"/><rect x="697.1" y="44.8" width="5.8" height="4" fill="#fbfcfe"/><path d="M697.9 47.3 H702.1" stroke="#9db6d6" stroke-width="0.7"/><rect x="697.3" y="50.8" width="5.6" height="3.8" fill="#d5dcdc"/><rect x="698.1" y="51.6" width="1" height="3" fill="#4f7fc2"/><path d="M1448.9 49.6 H1453.3 L1451.1 51.9 Z" fill="#555"/><path d="M1439.9 126.9 H1444.3 L1442.1 129.2 Z" fill="#555"/><circle cx="28.7" cy="127.2" r="6.1" fill="#e6e6e6" stroke="#c4c4c4" stroke-width="1"/><path d="M26.6 125.1 L30.8 129.3 M30.8 125.1 L26.6 129.3" stroke="#ea4a55" stroke-width="1.05"/><circle cx="208.3" cy="125.7" r="3.9" fill="#dfe9f8" stroke="#8c8c8c" stroke-width="1"/><path d="M206.6 125.7 H210" stroke="#7d8a99" stroke-width="1.3"/><path d="M211.3 128.7 L214.6 131.8" stroke="#6a6a6a" stroke-width="1.6" stroke-linecap="round"/><path d="M406.6 121 V130.5" stroke="#f28a52" stroke-width="1.2"/><path d="M404.5 129.6 H408.7 L406.6 133 Z" fill="#f28a52"/><path d="M409.2 122.4 H417 M409.2 124.4 H417 M409.2 129.5 H417" stroke="#555" stroke-width="1.1"/><path d="M411 127 H417 M411 132.2 H417" stroke="#8a8a8a" stroke-width="0.9"/><path d="M409.6 126 V132.5" stroke="#bbb" stroke-width="0.6"/><circle cx="27.30" cy="193.80" r="3.2" fill="#fff" stroke="#ababab" stroke-width="1"/><path d="M25.60 193.80 H29.00" stroke="#8a8a8a" stroke-width="1"/><circle cx="42.30" cy="212.20" r="3.2" fill="#fff" stroke="#ababab" stroke-width="1"/><path d="M40.60 212.20 H44.00" stroke="#8a8a8a" stroke-width="1"/><circle cx="57.30" cy="230.60" r="3.2" fill="#fff" stroke="#ababab" stroke-width="1"/><path d="M55.60 230.60 H59.00" stroke="#8a8a8a" stroke-width="1"/><circle cx="72.30" cy="249.00" r="3.2" fill="#fff" stroke="#ababab" stroke-width="1"/><path d="M70.60 249.00 H74.00" stroke="#8a8a8a" stroke-width="1"/><path d="M72.30 247.30 V250.70" stroke="#8a8a8a" stroke-width="1"/><circle cx="72.30" cy="267.40" r="3.2" fill="#fff" stroke="#ababab" stroke-width="1"/><path d="M70.60 267.40 H74.00" stroke="#8a8a8a" stroke-width="1"/><path d="M72.30 265.70 V269.10" stroke="#8a8a8a" stroke-width="1"/><circle cx="72.30" cy="285.80" r="3.2" fill="#fff" stroke="#ababab" stroke-width="1"/><path d="M70.60 285.80 H74.00" stroke="#8a8a8a" stroke-width="1"/><circle cx="87.30" cy="304.20" r="3.2" fill="#fff" stroke="#ababab" stroke-width="1"/><path d="M85.60 304.20 H89.00" stroke="#8a8a8a" stroke-width="1"/><circle cx="102.30" cy="322.60" r="3.2" fill="#fff" stroke="#ababab" stroke-width="1"/><path d="M100.60 322.60 H104.00" stroke="#8a8a8a" stroke-width="1"/><path d="M102.30 320.90 V324.30" stroke="#8a8a8a" stroke-width="1"/><circle cx="102.30" cy="341.00" r="3.2" fill="#fff" stroke="#ababab" stroke-width="1"/><path d="M100.60 341.00 H104.00" stroke="#8a8a8a" stroke-width="1"/><path d="M102.30 339.30 V342.70" stroke="#8a8a8a" stroke-width="1"/><circle cx="72.30" cy="414.60" r="3.2" fill="#fff" stroke="#ababab" stroke-width="1"/><path d="M70.60 414.60 H74.00" stroke="#8a8a8a" stroke-width="1"/><path d="M72.30 412.90 V416.30" stroke="#8a8a8a" stroke-width="1"/><circle cx="72.30" cy="469.80" r="3.2" fill="#fff" stroke="#ababab" stroke-width="1"/><path d="M70.60 469.80 H74.00" stroke="#8a8a8a" stroke-width="1"/><path d="M72.30 468.10 V471.50" stroke="#8a8a8a" stroke-width="1"/><circle cx="72.30" cy="488.20" r="3.2" fill="#fff" stroke="#ababab" stroke-width="1"/><path d="M70.60 488.20 H74.00" stroke="#8a8a8a" stroke-width="1"/><path d="M72.30 486.50 V489.90" stroke="#8a8a8a" stroke-width="1"/><circle cx="72.30" cy="506.60" r="3.2" fill="#fff" stroke="#ababab" stroke-width="1"/><path d="M70.60 506.60 H74.00" stroke="#8a8a8a" stroke-width="1"/><path d="M72.30 504.90 V508.30" stroke="#8a8a8a" stroke-width="1"/><circle cx="72.30" cy="525.00" r="3.2" fill="#fff" stroke="#ababab" stroke-width="1"/><path d="M70.60 525.00 H74.00" stroke="#8a8a8a" stroke-width="1"/><path d="M72.30 523.30 V526.70" stroke="#8a8a8a" stroke-width="1"/><circle cx="72.30" cy="543.40" r="3.2" fill="#fff" stroke="#ababab" stroke-width="1"/><path d="M70.60 543.40 H74.00" stroke="#8a8a8a" stroke-width="1"/><path d="M72.30 541.70 V545.10" stroke="#8a8a8a" stroke-width="1"/><circle cx="72.30" cy="561.80" r="3.2" fill="#fff" stroke="#ababab" stroke-width="1"/><path d="M70.60 561.80 H74.00" stroke="#8a8a8a" stroke-width="1"/><path d="M72.30 560.10 V563.50" stroke="#8a8a8a" stroke-width="1"/><circle cx="72.30" cy="690.60" r="3.2" fill="#fff" stroke="#ababab" stroke-width="1"/><path d="M70.60 690.60 H74.00" stroke="#8a8a8a" stroke-width="1"/><path d="M72.30 688.90 V692.30" stroke="#8a8a8a" stroke-width="1"/><circle cx="72.30" cy="709.00" r="3.2" fill="#fff" stroke="#ababab" stroke-width="1"/><path d="M70.60 709.00 H74.00" stroke="#8a8a8a" stroke-width="1"/><path d="M72.30 707.30 V710.70" stroke="#8a8a8a" stroke-width="1"/><circle cx="72.30" cy="727.40" r="3.2" fill="#fff" stroke="#ababab" stroke-width="1"/><path d="M70.60 727.40 H74.00" stroke="#8a8a8a" stroke-width="1"/><path d="M72.30 725.70 V729.10" stroke="#8a8a8a" stroke-width="1"/><path d="M1440.5 157.5 H1444.5 L1442.5 154.5 Z" fill="#c8c8c8"/><path d="M1440 727 H1445 L1442.5 731 Z" fill="#555"/><path d="M284.6 88.6 L284.6 101.2 L287.8 98.2 L293.4 98.2 Z" fill="#fff" stroke="#3a3a3a" stroke-width="1.1" stroke-linejoin="round"/></svg>
</body></html>
